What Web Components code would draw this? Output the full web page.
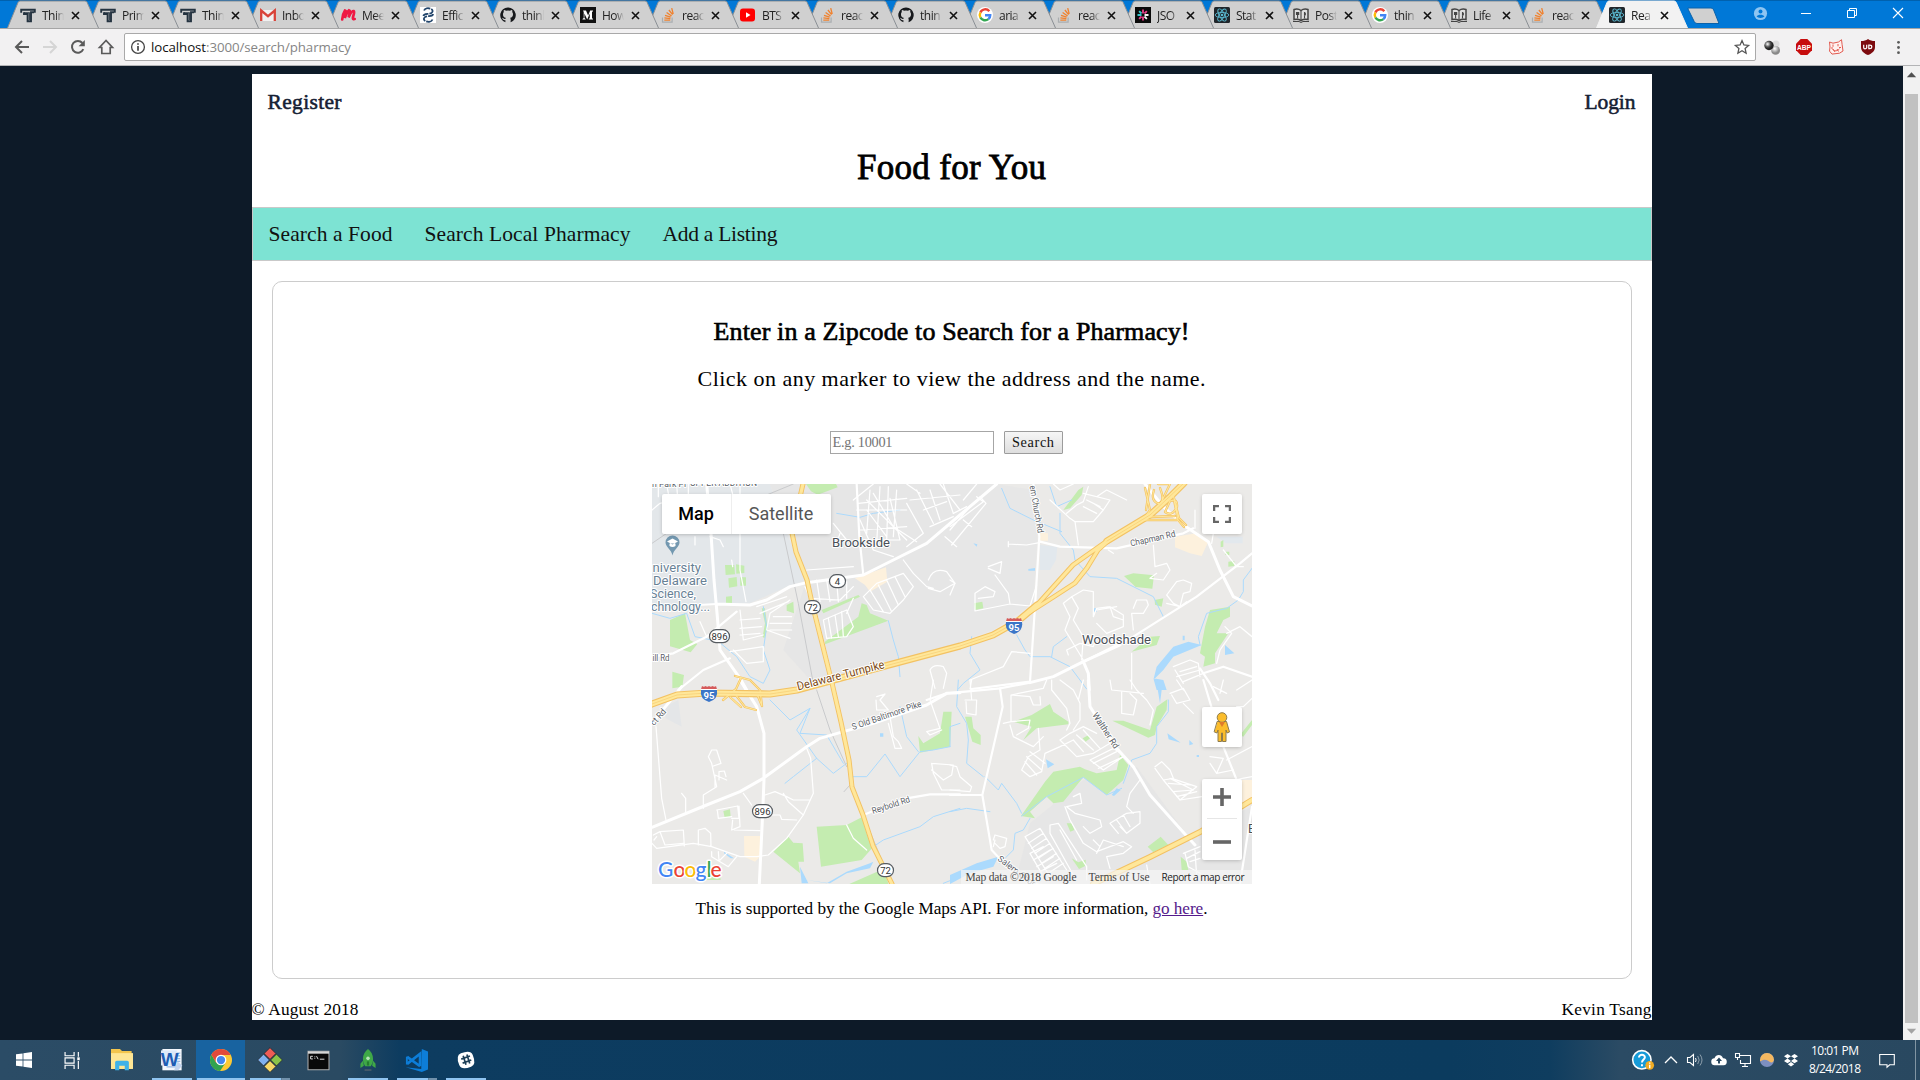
<!DOCTYPE html>
<html lang="en">
<head>
<meta charset="utf-8">
<title>Food for You</title>
<style>
html,body{margin:0;height:100%;overflow:hidden}
body{display:flex;flex-direction:column;height:1080px;font-family:"Liberation Serif",serif;color:#000}
</style>
</head>
<body>
<browser-tabs></browser-tabs>
<browser-toolbar></browser-toolbar>
<page-viewport>
  <food-app></food-app>
</page-viewport>
<task-bar></task-bar>
<script>
const define=(name,html,after)=>{
  const t=document.createElement('template');t.innerHTML=html;
  customElements.define(name,class extends HTMLElement{
    static get observedAttributes(){return ['name','size']}
    attributeChangedCallback(){if(this.shadowRoot&&after)after.call(this,this.shadowRoot)}
    connectedCallback(){
      if(this.shadowRoot)return;
      this.attachShadow({mode:'open'}).appendChild(t.content.cloneNode(true));
      if(after)after.call(this,this.shadowRoot);
    }
  });
};

/* Text run whose letter spacing is tuned to fill the width in its "w" attribute. */
define('fit-text','<style>:host{display:inline-block;white-space:pre}</style><span><slot></slot></span>',function(r){
  const w=+this.getAttribute('w'),s=r.querySelector('span'),n=this.textContent.length;
  s.style.letterSpacing='0px';
  const nat=s.getBoundingClientRect().width;
  const ls=(w-nat)/Math.max(1,n-1);
  s.style.letterSpacing=ls+'px';
  this.style.width=w+'px';
});

const stack='<path d="M2.5 10.5v4.7h9.6v-4.7" fill="none" stroke="#a9adb0" stroke-width="1.2"/><path d="M4.3 13.2h6M4.4 10.9l6 .7M5 8.3l5.7 1.9M6.6 5.5l5 3.5M8.9 3l3.7 4.7M11.7 1.2l1.5 5.8" stroke="#f0812d" stroke-width="1.3" fill="none"/>';
const tlogo='<path d="M1.200 5.700V2.800H14.800V5.700M4 5.200V7H7.600V14.200H11V5.300H14" fill="none" stroke="#243340" stroke-width="1.900"/><path d="M4 5.800H9.300V13" fill="none" stroke="#243340" stroke-width="1.100"/>';
const git='<path d="M8 .5a7.6 7.6 0 0 0-2.6 14.8v-2.2c-2.2.4-2.6-1-2.9-1.6l-.7-.7c1.4-.2 1.7 1.5 3.6 1.1.1-.5.3-.8.6-1.1C3.7 10.5 3 9.200 3 7.200c0-.9.3-1.600.8-2.100-.2-.6-.1-1.500.1-2.100.9 0 1.600.5 2.100.8a8 8 0 0 1 4 0c.7-.5 1.400-.8 2.100-.8.3.7.3 1.500.1 2.100.5.600.8 1.300.8 2.100 0 2-1 3.300-3 3.600.4.400.6.9.6 1.700v2.800A7.600 7.600 0 0 0 8 .5z" fill="#17191c"/><path d="M6 10.500C4 10 3.600 9 3.600 7.300c0-1 .3-1.500.9-2.100V3.500L6.200 4.400h3.600l1.700-.9v1.700c.6.600.9 1.100.9 2.100 0 1.700-.4 2.700-2.400 3.200l.3 3.500H5.800z" fill="#d0d0d0"/>';
const gg='<circle cx="8" cy="8" r="8" fill="#fff"/><g fill="none" stroke-width="2.5"><path d="M12.300 4.200A5.300 5.300 0 0 0 3.400 5.500" stroke="#ea4335"/><path d="M3.400 5.500a5.300 5.300 0 0 0 0 5" stroke="#fbbc05"/><path d="M3.400 10.500a5.300 5.300 0 0 0 8 1.600" stroke="#34a853"/><path d="M11.400 12.100A5 5 0 0 0 13.200 8.200H8" stroke="#4285f4"/></g>';
const react='<rect width="16" height="16" rx="1.500" fill="#20262b"/><g fill="none" stroke="#5ab9d0" stroke-width=".9"><ellipse cx="8" cy="8" rx="6.800" ry="2.600"/><ellipse cx="8" cy="8" rx="6.800" ry="2.600" transform="rotate(60 8 8)"/><ellipse cx="8" cy="8" rx="6.800" ry="2.600" transform="rotate(120 8 8)"/></g><circle cx="8" cy="8" r="1.300" fill="#5ab9d0"/>';
const book='<path d="M1 2.500c3-.8 5-.5 7 1 2-1.500 4-1.800 7-1v10c-3-.6-5-.3-7 1-2-1.300-4-1.600-7-1z" fill="#dedede" stroke="#444" stroke-width="1.500"/><path d="M8 3.500v10M4.600 5v6.500M3.500 5v2.500h2.200V5M11.500 5v6.500M11 5.500c2 0 2 3 0 3" stroke="#444" fill="none" stroke-width="1.100"/><path d="M0 14.500h6l2 1 2-1h6" stroke="#444" fill="none"/>';
const I={
 t:tlogo,so:stack,gh:git,g:gg,react,book,
 gmail:'<path d="M1 3h14v11H1z" fill="#f1f1f1"/><path d="M1.200 14V3.500L8 9.200l6.800-5.700V14" fill="none" stroke="#d9443a" stroke-width="2.300"/>',
 meet:'<path d="M2.200 12.500C2.500 8 4 5 5 3.500c1.600.4 1 3-.2 7.500C6 8 7 4.700 9 3.300c1.900.4.500 3.700-.4 7C10 7.500 11.300 3.800 13.600 4c1.700.9-.7 4.500-.7 7.200 0 1.200 1.200.9 1.800.8" fill="none" stroke="#ef1843" stroke-width="2.700" stroke-linecap="round"/>',
 eff:'<path d="M0 0h16v16H0z" fill="#fff"/><path d="M4 3.500C6-1 15 2 12 5.500 10 8 3.500 5.500 3.500 9M12.500 12.500c-2 4.500-11 1.500-8-2C6.500 8 13 10.500 13 7" stroke="#22456b" stroke-width="1.800" fill="none" stroke-dasharray="7 1"/>',
 med:'<path d="M0 0h16v16H0z" fill="#111"/><path d="M3 3.500h3l2.100 5 2.100-5H13v.8l-1 .8v6l1 .8v.6H8.800v-.6l1-.8V6.600l-2.600 6-2.800-6v4.300L5.600 12v.5H2.500V12L3.700 11V5z" fill="#fff"/>',
 yt:'<rect y="1.500" width="15" height="13" rx="3" fill="#f00"/><path d="M6 5.300v5.400L10.500 8z" fill="#fff"/>',
 json:'<path d="M0 0h16v16H0z" fill="#0a0a0a"/><g stroke-width="1.800"><path d="M8 2.500v4M11.900 4.100 9.500 6.500" stroke="#e8408a"/><path d="M13.500 8h-4M11.900 11.900 9.500 9.500" stroke="#f5f5f5"/><path d="M8 13.500v-4M4.100 11.900l2.400-2.400" stroke="#e8408a"/><path d="M2.500 8h4M4.100 4.100l2.400 2.400" stroke="#38c5c9"/></g>',
 back:'<path d="M15 8H2.500M8 2 2 8l6 6" fill="none" stroke="#5a5a5a" stroke-width="2"/>',
 fwd:'<path d="M1 8h12.500M8 2l6 6-6 6" fill="none" stroke="#d5d5d5" stroke-width="2"/>',
 reload:'<path d="M13.300 10.200A5.900 5.900 0 1 1 12.400 4" fill="none" stroke="#5a5a5a" stroke-width="2"/><path d="M14.800 1v6.200H8.600z" fill="#5a5a5a"/>',
 home:'<path d="M8 1.500 1.500 8.500h2.300v6h8.400v-6h2.300z" fill="none" stroke="#5a5a5a" stroke-width="1.700"/>',
 info:'<circle cx="8" cy="8" r="6.400" fill="none" stroke="#444" stroke-width="1.300"/><path d="M8 7v4.800M8 4.200v1.600" stroke="#444" stroke-width="1.700"/>',
 star:'<path d="m8 1.600 1.900 4.300 4.700.5-3.500 3.100 1 4.700L8 11.800l-4.100 2.400 1-4.700L1.400 6.400l4.700-.5z" fill="none" stroke="#555" stroke-width="1.300"/>',
 orbs:'<defs><radialGradient id="a" cx=".35" cy=".35"><stop offset="0" stop-color="#fff"/><stop offset=".6" stop-color="#555"/><stop offset="1" stop-color="#222"/></radialGradient><radialGradient id="b" cx=".4" cy=".3"><stop offset="0" stop-color="#fff"/><stop offset="1" stop-color="#888"/></radialGradient></defs><circle cx="12" cy="5" r="3.500" fill="#ddd"/><circle cx="11.600" cy="11.400" r="4.400" fill="url(#b)"/><circle cx="5" cy="6.500" r="4.700" fill="url(#a)"/>',
 abp:'<path d="M4.700 0h6.600L16 4.700v6.600L11.300 16H4.700L0 11.300V4.700z" fill="#c70d0d"/><text x="8" y="10.700" font-size="7.500" font-weight="bold" fill="#fff" text-anchor="middle" font-family="Liberation Sans" textLength="14" lengthAdjust="spacingAndGlyphs">ABP</text>',
 cat:'<path d="m1.500 3 3.500 1.200L10.500 3l3-2.300.6 4.800.9 6.500-3.500 2.200-7.500.9-2.500-3L2 8z" fill="#fff0ee" stroke="#e25a50"/><path d="M5 5.500v2.300M10 5v2.300M4.500 10.500c2.500 2 5 1.500 7-.7M5 10l2 3M9 10l1.500 2.500M3 9h2M11 8.500h2" fill="none" stroke="#e25a50"/>',
 shield:'<path d="M8 0c2 1.500 4 2 7 2v6c0 4-3 6.500-7 8-4-1.500-7-4-7-8V2c3 0 5-.5 7-2z" fill="#7d0b0f"/><path d="M3.700 5.800v3q0 1 1.300 1t1.700-1v-3M8.800 6.200v3.400h1q2 0 2-1.700t-2-1.700z" fill="none" stroke="#fff" stroke-width="1.200"/>',
 dots:'<g fill="#5a5a5a"><circle cx="8" cy="2.500" r="1.500"/><circle cx="8" cy="8" r="1.500"/><circle cx="8" cy="13.500" r="1.500"/></g>',
 user:'<circle cx="8" cy="8" r="7" fill="#8ec5f2"/><circle cx="8" cy="5.800" r="2.100" fill="#0078d7"/><path d="M3.800 11c1.500-2.300 6.900-2.300 8.400 0-1.600 2.300-6.800 2.300-8.400 0z" fill="#0078d7"/>',
 min:'<path d="M3 8.500h10" stroke="#fff"/>',
 max:'<path d="M3.500 5.500h7v7h-7zM5.500 5V3.500h7v7H11" fill="none" stroke="#fff"/>',
 close:'<path d="m3 3 10 10M13 3 3 13" stroke="#fff" stroke-width="1.100"/>',
 win:'<path d="M0 2.300 6.600 1.400v6.200H0zM7.400 1.300 16 0v7.600H7.400zM0 8.400h6.600v6.200L0 13.700zM7.400 8.400H16V16l-8.600-1.200z" fill="#fff"/>',
 task:'<path d="M1 0v3.500h8.500V0M1 16v-3.500h8.500V16M1 5.500h8.500v5H1zM13.500 0v4.500M13.500 8.500V16" fill="none" stroke="#fff" stroke-width="1.100"/><path d="M12.500 5h2.300v2.700h-2.300z" fill="#fff"/>',
 folder:'<path d="M0 0h6.500L8 1.500h7V14.500H0z" fill="#f3c54d"/><path d="M0 3h16v11.500H0z" fill="#fee695"/><path d="M3 15.500V9.700Q3 8.500 4.200 8.500h7.600q1.200 0 1.200 1.200v5.800h-3v-3.300H6v3.300z" fill="#3fb2e8"/>',
 word:'<path d="M1 0h14v15.500H1z" fill="#f4f7fc"/><path d="M9 3h5M9 5h5M9 7h5M9 9h5M4 13h8" stroke="#9ab7df"/><path d="M0 1h11.500v11H0z" fill="#dce8f8"/><text x="6.300" y="12" font-size="14" font-weight="bold" fill="#1d5cb3" text-anchor="middle" font-family="Liberation Sans" textLength="13" lengthAdjust="spacingAndGlyphs">W</text><path d="m12 9 3.500 3-3 3.500h-3z" fill="#c3d4ee"/>',
 chrome:'<circle cx="8" cy="8" r="8" fill="#fcc934"/><path d="M1 4.100A8 8 0 0 0 7.300 16L11.300 10 8 8 4.500 10z" fill="#31a350"/><path d="M1 4.100A8 8 0 0 1 15 4.300H8L8 8 4.700 10.200z" fill="#e24a3b"/><circle cx="8" cy="8" r="3.900" fill="#fff"/><circle cx="8" cy="8" r="3" fill="#4587ee"/>',
 gitw:'<g transform="rotate(45 8 8)" stroke="#222" stroke-width=".4"><path d="M2.200 2.200h5.500v5.500H2.200z" fill="#ee5b55"/><path d="M8.300 2.200h5.500v5.500H8.300z" fill="#8bc34a"/><path d="M2.200 8.300h5.500v5.500H2.200z" fill="#7fb0ef"/><path d="M8.300 8.300h5.500v5.500H8.300z" fill="#f7d768"/></g>',
 cmd:'<path d="M0 1h16v14H0z" fill="#090909" stroke="#aaa" stroke-width=".8"/><path d="M0 1h16v1.800H0z" fill="#d6d6d6"/><path d="M3.700 4.800H2v2h1.700M5.200 4.900v.7M5.200 6.300v.6M6.500 4.700l1.200 2.300M9 7h3.500" stroke="#eee" stroke-width=".7" fill="none"/>',
 mongo:'<path d="M8 0c2.200 1.800 3.700 4 3.700 7.300 0 2.200-.6 3.700-1.700 5.200H6c-1.100-1.500-1.700-3-1.700-5.200C4.300 4 5.800 1.800 8 0z" fill="#3fa847"/><path d="M4.300 8.500 2.500 10.800v3l2.500-1.600M11.700 8.500l1.800 2.300v3L11 12.200" fill="#3fa847"/><circle cx="8" cy="6.800" r="1.300" fill="#b8e4b8"/><path d="M7.200 9h1.600v3H7.200z" fill="#257d30"/><path d="M5.500 15.300h5" stroke="#54626c"/>',
 vs:'<path d="m11.700 0 4.300 1.800v12.400L11.700 16 .5 12.700l10.800 1.200z" fill="#0d7dd8"/><path d="m1.500 5.500 9 6.500M1.500 10.300 10.500 3.300V12" stroke="#0d7dd8" stroke-width="1.900" fill="none"/><path d="M1.300 5.300v5.500" stroke="#0d7dd8" stroke-width="1.300"/>',
 slack:'<path d="M3.500 2Q12-1.500 14 3.500 17.500 12 12.500 14 4 17.500 2 12.500-1.500 4 3.500 2z" fill="#fff"/><g stroke="#1e4058" stroke-width="1.500"><path d="m5.500 4.200 2.500 8M8.800 3.200l2.500 8M3.800 7.200l7.700-2.700M5 10.800 12.700 8"/></g>',
 help:'<circle cx="7.500" cy="7.500" r="7" fill="#179bd8" stroke="#fff" stroke-width="1.200"/><path d="M5.300 5.800C5.300 2.800 10 3 9.800 5.700 9.700 7.200 7.600 7.500 7.600 9.500M7.600 10.900v1.400" fill="none" stroke="#fff" stroke-width="1.500"/><circle cx="13.500" cy="11.700" r="3.300" fill="#f0ab23"/><path d="M13.500 11.300v2.600M13.500 9.500v1" stroke="#fff" stroke-width="1.100"/>',
 up:'<path d="m2 11 6-6 6 6" fill="none" stroke="#fff" stroke-width="1.300"/>',
 snd:'<path d="M.5 5.500H3l3.500-3v11L3 10.500H.5z" fill="none" stroke="#fff" stroke-width="1.100"/><path d="M8.500 6q1.300 2 0 4" stroke="#fff" fill="none"/><path d="M10.700 4q3 4 0 8M13 2.500q4 5.500 0 11" stroke="#8ea0ad" fill="none"/>',
 cloud:'<path d="M4 13.200a3.500 3.500 0 0 1-.5-7C5 2 10.500 1.800 12 6.200a3.500 3.500 0 0 1 .5 7z" fill="#fff"/><path d="m8 5.500 3 3.500H9v2.500H7V9H5z" fill="#294860"/>',
 mon:'<path d="M4.500 3.500h11v8h-10V8M10 11.500v3M7 14.500h6M.5 1.500h4v4h-4zM2.500 5.500V8" fill="none" stroke="#fff" stroke-width="1.100"/>',
 orb:'<circle cx="8" cy="8" r="7" fill="#7d8fc0"/><path d="M1 8a7 7 0 0 1 14 0q-1 3-3 2.500C9 9.500 7 5.500 1 9.500z" fill="#f4b860"/>',
 drop:'<g fill="#fff"><path d="m4.500 2 3.500 2.300-3.500 2.300L1 4.300zM11.500 2 15 4.300l-3.500 2.300L8 4.300zM4.500 6.600 8 8.900l-3.500 2.300L1 8.900zM11.500 6.600 15 8.900l-3.500 2.300L8 8.900zM8 10l3.200 2.200L8 14.500l-3.200-2.300z"/></g>',
 note:'<path d="M.7 2.500h14.600v10.300h-4.600L8 15.200V12.800H.7z" fill="none" stroke="#fff" stroke-width="1.100"/>',
 full:'<path d="M1 5.300V1h4.300M10.700 1H15v4.300M15 10.700V15h-4.300M5.300 15H1v-4.300" fill="none" stroke="#666" stroke-width="2"/>',
 plus:'<path d="M8 0v16M0 8h16" stroke="#666" stroke-width="3.200"/>',
 minus:'<path d="M0 8h16" stroke="#666" stroke-width="3.200"/>',
 tri:'<path d="M3 11h10L8 5.500z" fill="#505050"/>',
 trid:'<path d="M3 5h10l-5 5.500z" fill="#a3a3a3"/>'
};
define('ui-icon','<style>:host{display:block;flex:none}svg{display:block;overflow:visible}</style><svg viewBox="0 0 16 16"></svg>',function(r){
  const s=r.querySelector('svg'),z=this.getAttribute('size')||16;
  s.setAttribute('width',z);s.setAttribute('height',z);s.innerHTML=I[this.getAttribute('name')]||'';
});

/* One browser tab: slanted shape, favicon, faded title and close mark. */
define('browser-tab',`<style>
:host{display:block;flex:none;width:80px;height:28px;font:12px "Open Sans",sans-serif;color:#222}
:host([narrow]){width:79px}
.b{display:grid;width:93px}
.b>*{grid-area:1/1}
svg{display:block;overflow:visible}
.r{display:flex;align-items:center;padding:2px 0 0 13.500px;height:26px;box-sizing:border-box;margin-top:1px}
.l{width:22px;margin-left:6px;overflow:hidden;white-space:nowrap;letter-spacing:-.5px;-webkit-mask:linear-gradient(90deg,#000 60%,transparent);mask:linear-gradient(90deg,#000 60%,transparent)}
.x{width:9px;height:9px;margin-left:7px}
</style><div class="b"><svg width="93" height="28"><path class="s" d="M.5 28 11 2.500Q11.700 1 13 1H78Q79.600 1 80.200 2.500L91.500 28" fill="#d0d0d0" stroke="#8a8f94" stroke-width="1"/></svg>
<div class="r"><ui-icon></ui-icon><span class="l"><slot></slot></span><svg class="x" viewBox="0 0 9 9"><path d="m1 1 7 7M8 1 1 8" stroke="#111" stroke-width="1.600"/></svg></div></div>`,function(r){
  r.querySelector('ui-icon').setAttribute('name',this.getAttribute('icon'));
  if(this.hasAttribute('active')){const p=r.querySelector('.s');p.setAttribute('fill','#f2f2f2');p.setAttribute('stroke','#f2f2f2')}
});
define('browser-tabs',`<style>
:host{display:flex;height:28px;background:#0078d7;flex:none;justify-content:space-between;overflow:hidden;box-shadow:inset 0 1px #0061ae}
.t{display:flex;padding-left:6.500px}
.n{margin-left:11px}
.w{display:flex;align-items:center;padding:0 14.500px 2px 0;gap:30px}
</style><div class="t"></div><div class="w"><ui-icon name="user" size="15"></ui-icon><ui-icon name="min"></ui-icon><ui-icon name="max"></ui-icon><ui-icon name="close"></ui-icon></div>`,function(r){
  const L=[['t','Thin'],['t','Prim'],['t','Thin'],['gmail','Inbo'],['meet','Mee'],['eff','Effic'],['gh','think'],['med','How'],['so','reac'],['yt','BTS'],['so','reac'],['gh','thin'],['g','aria'],['so','reac'],['json','JSO'],['react','Stat'],['book','Post'],['g','thin'],['book','Life'],['so','reac'],['react','Rea']];
  r.querySelector('.t').innerHTML=L.map(([i,t],k)=>`<browser-tab icon="${i}" ${k>8?'narrow':''} ${k==20?'active':''} style="z-index:${k==20?50:30-k}">${t}</browser-tab>`).join('')+'<svg class="n" width="33" height="28"><path d="M2 8h23q2 0 2.700 2L33 23.500H11q-2 0-2.800-2L2 9z" fill="#d0d0d0" stroke="#0a62aa"/></svg>';
});
define('browser-toolbar',`<style>
:host{display:flex;align-items:center;box-sizing:border-box;height:38px;flex:none;background:#f2f1f2;border-top:1px solid #a5a5a5;border-bottom:1px solid #b3b4b6;padding:0 14px 0 14px;font:13.300px "Open Sans",sans-serif}
.n{display:flex;gap:12px;width:110px;flex:none}
.o{display:flex;align-items:center;flex:1;height:26px;border:1px solid #a9a9a9;border-radius:2px;background:#fff;padding:0 5px;margin-top:0}
.u{flex:1;margin-left:5px;color:#858585}
b{font-weight:400;color:#111}
.e{display:flex;gap:16px;margin-left:8px;align-items:center}
.e :last-child{margin:0 0 0 -1px}
</style><div class="n"><ui-icon name="back"></ui-icon><ui-icon name="fwd"></ui-icon><ui-icon name="reload"></ui-icon><ui-icon name="home"></ui-icon></div>
<div class="o"><ui-icon name="info"></ui-icon><span class="u"><fit-text w="200"><b>localhost</b>:3000/search/pharmacy</fit-text></span><ui-icon name="star"></ui-icon></div>
<div class="e"><ui-icon name="orbs"></ui-icon><ui-icon name="abp"></ui-icon><ui-icon name="cat"></ui-icon><ui-icon name="shield"></ui-icon><ui-icon name="dots" size="15"></ui-icon></div>`);

define('page-viewport',`<style>
:host{display:flex;height:974px;flex:none;background:#0d1a28}
.c{flex:1;display:flex;justify-content:center;align-items:flex-start;padding-top:8px}
.s{width:17px;flex:none;background:#f1f1f1;display:flex;flex-direction:column;align-items:center}
.s ui-icon{height:17px;padding-top:1px;box-sizing:border-box}
.t{width:13px;height:929px;margin-top:11px;background:#c1c1c1}
</style><div class="c"><slot></slot></div><div class="s"><ui-icon name="tri" size="15"></ui-icon><div class="t"></div><ui-icon name="trid" size="15"></ui-icon></div>`);

define('food-app',`<style>
:host{display:flex;flex-direction:column;width:1400px;height:946px;background:#fff}
header{display:flex;justify-content:space-between;padding:15px 16px 0;font-size:21.500px;line-height:26px;height:42px;box-sizing:border-box;color:#152033;-webkit-text-stroke:.55px #152033}
h1{margin:0;text-align:center;font-size:35px;line-height:44px;font-weight:400;-webkit-text-stroke:.8px #000;padding:30px 0 17px}
nav{display:flex;gap:32px;box-sizing:border-box;height:54px;border:1px solid #c9c9c9;background:#7de3d3;padding:2px 16px 0;align-items:center;font-size:21.500px;color:#111}
footer{display:flex;justify-content:space-between;font-size:17.300px;line-height:20px;margin-top:21px}
</style>
<header><fit-text w="74">Register</fit-text><fit-text w="51">Login</fit-text></header>
<h1><fit-text w="189">Food for You</fit-text></h1>
<nav><fit-text w="124">Search a Food</fit-text><fit-text w="206">Search Local Pharmacy</fit-text><fit-text w="115">Add a Listing</fit-text></nav>
<pharmacy-search></pharmacy-search>
<footer><fit-text w="107">© August 2018</fit-text><fit-text w="90">Kevin Tsang</fit-text></footer>`);

define('pharmacy-search',`<style>
:host{display:flex;flex-direction:column;align-items:center;box-sizing:border-box;height:700px;margin:20px 20px 0;border:1px solid #ccc;border-radius:10px}
h2{margin:34px 0 0;font-size:26px;line-height:32px;font-weight:400;-webkit-text-stroke:.65px #000}
p{margin:0}
.a{font-size:22px;line-height:26px;margin-top:18px}
form{display:flex;gap:10px;margin:39px 11px 0 0;height:23px}
.i{box-sizing:border-box;width:164px;border:1px solid #a6a6a6;padding:0 2px;font-size:14.300px;line-height:21px;color:#757575}
button{box-sizing:border-box;width:59px;border:1px solid #9c9c9c;border-radius:1px;background:linear-gradient(#f6f6f6,#dedede);padding:0;font:14.300px/20px "Liberation Serif",serif;color:#111}
map-view{margin-top:30px}
.m{font-size:17.200px;line-height:20px;margin-top:15px}
a{color:#551a8b;text-decoration:underline}
</style>
<h2><fit-text w="476">Enter in a Zipcode to Search for a Pharmacy!</fit-text></h2>
<p class="a"><fit-text w="508">Click on any marker to view the address and the name.</fit-text></p>
<form><div class="i"><fit-text w="60">E.g. 10001</fit-text></div><button type="button"><fit-text w="42">Search</fit-text></button></form>
<map-view></map-view>
<p class="m"><fit-text w="512">This is supported by the Google Maps API. For more information, <a>go here</a>.</fit-text></p>`);

/* Map artwork. Each entry: style class, tile key, path data in tile units (3 per pixel). */
const T={A:[640,470],B:[950,470],C:[640,680],D:[950,680],E:[800,600]};
const art=[
 ['z','A','M36 42H390L440 190 500 330 440 350 330 400 36 405z','#e3e7ea'],
 ['z','A','M390 42H960V525L735 590 520 640 430 540 500 330z','#e6e6e6'],
 ['z','B','M0 42H140L250 60 262 210 250 400 130 480 0 525z','#e7e7e7'],
 ['z','D','M560 260 710 465 906 380V612H300L200 590 240 430 400 300z','#e6e6e6'],
 ['z','B','M270 225 322 230 318 270 300 300H270z','#e2e8ed'],
 ['z','B','M800 200h78v20h-50z','#e2e8ed'],
 ['z','A','M645 325 738 292 742 335 690 365 675 345z','#fdf1dd'],
 ['z','B','M675 200 740 190 775 215 755 258 720 250 675 232zM268 188l26 2v22h-24z','#fdf1dd'],
 ['z','C','M312 468h48v62l-15 15-32-15z','#fdf1dd'],
 ['z','D','M876 300h30v55l-30 15z','#fdf1dd'],
 ['z','C','M75 80l40-20 10 80-48-25z','#e4e6e8'],
 ['g','A','M255 285l28 0 2 28-28 2zM288 283l25 4 0 22-24 2zM265 325l25-4 2 28-25 4zM300 322l18 0 0 25-17 0zM258 380l18-2 0 22-18 5zM90 450l45-20 15 80 22 12-20 25-62-18zM97 605l35 10-5 35-30 5zM440 405l20-10 2 35-22-8zM365 415l10 0 8 60-10 30-5-5 7-40zM498 42h90l5 10-60 22-20-10zM545 420 655 375 660 380 550 430zM555 515 655 440 665 400 680 405 690 430 745 452 555 523z'],
 ['g','B','M385 60l15-10-5 25-35 40-20 5zM522 318l28-8 62 6-5 40-50-5zM72 400l25-5 3 20-25 5zM614 390l26-5-5 25-20-6zM545 545 600 500 630 498 620 525zM812 215l8-5 0 20-8 2zM826 245l12 0 0 10-12 0zM835 275l18-2 0 15-18 2zM765 470l15-50 60-10 0 30-20 10-20 40 35 0-40 60 0 30-35 10 5-30-15-10z'],
 ['g','C','M530 440 620 435 665 412 690 490 700 500 665 540 543 560zM400 515 445 470 460 488 488 490 492 545 475 545 480 580zM250 393l20-5 2 22-18 3zM628 612 735 565 745 612zM835 168 850 190 900 160 910 95 935 95 930 200 880 210 840 218zM160 600l80-15 2 15z'],
 ['g','D','M45 110l20 0 5 35 22 20 0 30-25-10zM190 125 245 105 300 72 310 95 355 125 355 133 260 145 220 180 245 140zM487 122 520 122 600 150 620 80 652 58 650 90 620 140 615 165 595 173zM213 408 285 305 310 275 390 260 405 268 440 280 500 270 510 225 535 255 520 300 470 345 400 292 340 365 310 370 290 350 240 395 255 415zM398 175l18-10 6 8-15 12zM593 500 632 470 655 495 610 517zM350 430l15 0 8 20-12 5zM365 535l20 12 22-8 0 18-20 10zM692 530l18 15 5 25-20 0zM870 165 906 120V135L880 170z'],
 ['w','A','M590 130 660 142 700 130 780 120M230 510 290 560 330 620 370 640 390 600 370 540 380 470 370 410M745 452 760 510 775 560 780 620M36 430 90 445 140 430 165 500 240 515'],
 ['w','B','M155 55 180 115 250 150 335 185M330 130 330 190 370 240 375 270 420 320 500 325 570 360 610 380 640 440M300 50 320 110 365 90M200 495 225 540 240 560 300 560 360 590 410 657M65 500 60 550 90 600 40 640 25 657M350 500 310 530 305 560M906 295 880 330 880 365 865 390 830 415 770 430 745 500 750 525'],
 ['w','C','M390 60 450 120 510 85 470 150 530 235 580 280 620 250M510 85 480 160 560 165 610 250M435 310 460 290 530 235M640 290 680 290 735 222 780 290 840 215 880 210 930 200M780 80 800 170 835 215M700 500 730 480 840 440 880 410 960 385M930 200 930 140 960 130M960 590 910 610'],
 ['w','D','M0 395 50 385 120 395M105 290 145 330 155 310 200 370 215 400M240 415 220 450 195 460 190 510 150 550M25 0 20 80 50 130 55 180 50 250 100 290M655 60 655 95 620 140 620 190 600 220 545 240 520 310M215 408 290 350 400 292 470 345 515 325'],
 ['v','B','M610 630 620 590 670 530 715 515 755 525 670 560 640 600zM610 625l10 35 30 0-10-30zM825 525l28 25-28 5zM432 415l8 0 0 10-8 0zM235 297l20-3 0 8-20 0zM70 220l12 3-2 7zM698 497l6 0 0 14-6 0z'],
 ['v','C','M500 600 560 610 620 575 690 550 700 545 690 565 620 580 570 610zM480 560l25 50-20 0zM252 515l30 20-10 0-20-15zM720 160l10 0 0 10-10 0z'],
 ['v','D','M0 585 80 550 145 530 130 560 60 580 0 612zM288 238l25 15-20 12zM652 160l40 28-36-10zM718 180l12 12-12 4zM485 345l15-20 12 5-20 18zM740 225h7v6h-7zM630 70 620 10 625 0 635 30z'],
 ['n','A','M36 120 60 100 170 75 200 80M55 42V80M80 42 85 70M110 42 112 72M145 42V72M270 42 280 80M300 42 300 300 318 395M210 200 240 210 250 230M165 200 165 225M275 270 278 290M500 300 640 290M530 330 540 395M560 330 570 395M590 335 595 395M620 335 620 385M495 350 510 385 600 390 640 350M580 160 620 210M600 190 590 220M640 90 700 42M655 100 800 85M700 70 760 170M680 120 740 200M660 150 700 240M690 60 680 190M720 50 710 220M745 50 740 215M770 60 760 200M660 180 800 170M670 210 780 210M650 120H800M840 70 800 42M810 90 960 75M830 60 880 160M870 60 900 150M910 42 940 130M800 100 850 190 800 230M750 85 780 210M900 42 960 120M850 120 920 95M870 170 940 140M700 240 760 260M680 90 800 210M760 170 830 215M915 200 950 230'],
 ['n','A','M670 380 710 340 790 310 820 350 790 390 750 430 700 420zM690 360 730 425M715 345 755 425M740 330 775 405M765 320 795 380M550 450 620 420 640 470 620 500 560 505zM565 445 575 505M585 435 595 500M605 425 610 500M640 385 620 430M790 270 820 310M820 310 860 350 880 355M865 330Q880 290 920 305L945 340 900 365 865 355M270 545 370 530 370 575 320 580 280 540M300 420 310 510 370 495M300 450 360 445M300 475 365 470M300 495 360 490M390 430 380 480 450 505M390 430 450 390M400 440 455 440M390 460 455 460M390 480 455 480M350 410 440 380M360 430 445 395M870 600Q880 580 910 590L920 610 910 655M870 600 885 655M180 455 200 500'],
 ['n','B','M40 90 80 42M0 170 100 95 80 80M60 110 0 180M90 80 108 100 5 225M40 150 65 170M10 130 50 110M0 330 15 340 0 375M115 290 155 275 150 310 115 295M135 315 175 370 180 402M75 423 180 402 240 408 260 345M75 423 75 370 105 350 135 365 130 380 85 385M175 215 175 230M175 222 230 225 268 218M310 42 330 60 370 42M300 90 360 145 375 155 385 225M350 130 380 105 400 95 415 50M375 155 430 155 460 120 430 100M400 110 440 130M410 90 450 110M400 70 480 90 460 120M440 80 470 60 530 90M340 400 365 380 400 360 430 365 430 440M340 400 360 440 345 480 400 570M365 380 385 415 370 450 400 500 395 570M430 440 440 415 480 410 520 435 520 470 470 490 440 460M480 410 490 440 520 450M355 555 350 540 390 520 430 530 440 500M440 420 500 410M550 415 560 390 590 390 595 405 580 430 545 430 550 480M610 225 615 290 650 280 660 300 640 330 600 325 620 310M650 375 670 400 690 410 700 370 720 365 725 340 700 330 680 335 650 375M650 400 690 410 710 395M60 630 160 590 185 545 240 550M65 630 60 657M545 550 545 657M475 240 490 250M735 120 735 175M790 190 785 220M820 240 860 290 880 290M830 490 870 470 906 500M825 470 845 490 810 540 800 580M670 590 720 570 745 580 750 620M690 605 740 590M680 620 750 600M700 635 760 610M675 600 700 640'],
 ['n','C','M48 140 65 355 78 420M125 340 137 355 137 395M190 385 190 345 230 320 215 250 205 230 215 210 230 210 243 250 220 258M225 320 225 285 260 300M237 300V275L253 273 258 290M310 340 335 375M375 345 405 335 440 350 460 360 510 360M430 340 445 365 490 405M375 405 420 405 425 418 470 420M500 205 512 235 520 340 490 405 440 475 385 525 350 530M350 530 300 530 215 500 160 490 50 505 36 490M230 390 293 378 297 415 275 415M297 378 300 440 275 450 278 420M232 390 235 415 275 410M283 450 360 452M40 465 60 455 130 450 133 498M60 455 75 495 130 490M42 480 50 470M175 495 175 450 195 445 212 460 213 500M215 515 215 530 265 560 290 530M240 540 260 520M235 515 237 540M710 50 735 42 720 60 745 90 710 90 708 60M745 130 765 205 785 205 775 185 760 170 750 110 765 110M880 0 870 60 900 145 860 155 870 165 905 150M875 250 940 255 935 285 910 300 875 270M875 250 880 280 905 330 960 330M620 435 640 475 680 510'],
 ['n','D','M45 60 80 60 78 105 50 100 48 65M60 0 65 60M183 45 240 50 250 75 272 75 270 50M160 130 183 125 183 45M183 45 280 25 290 0M305 0 305 30 350 85 360 130 350 150M330 0 370 30 390 70 390 120 370 150M385 60 400 0M480 0 485 30 580 40M515 35 515 100 550 105 560 60 540 40M540 0 560 30 590 60 610 90 600 135M183 125 240 120 235 145 200 165M180 135 190 170 250 200 280 170M265 145 270 210 235 230 215 270 240 290 275 275 285 220 330 200 370 180M230 230 275 270M225 245 260 285M240 215 285 250M330 180 360 160 400 140 440 160M330 180 380 230 430 220 480 190M370 180 400 215M380 165 430 210M400 150 450 205M420 240 490 205 520 225M430 250 500 215M445 265 520 230M420 240 460 270 520 230M370 350 390 340 395 370 350 380 375 400 450 420 455 440 420 460 400 440M345 380 360 420 400 490 440 515 520 485 545 500 520 520 470 530M300 460 300 435 325 430 410 560 410 600M300 460 370 585M330 450 380 540M470 530 480 565M430 480 450 500M440 520 460 480 520 500M480 430 530 400 570 395 570 430 530 460 510 440M480 430 505 460M500 420 530 460M520 405 540 440M570 300 540 340 530 380 550 400M615 260 635 245 660 270 670 295 640 300 615 265M640 300 690 360 755 350M660 295 730 330M655 310 720 315M670 335 730 330M680 350 740 335M690 360 740 320 665 295'],
 ['n','D','M225 470 270 445M235 490 280 460M245 505 290 475M255 520 300 490M265 535 310 505M275 550 320 520M285 565 330 535M295 580 340 550M225 470 300 590M270 445 350 570M240 520 275 580M240 520 280 500M250 540 300 510M260 560 310 530M270 575 320 550M660 40 700 25 720 60 680 70 665 45M680 0 700 30M700 70 730 100M780 230 820 235 800 280 780 250M800 280 850 270M830 240 906 200M850 300 906 290M700 520 750 500M710 535 750 515M720 545 750 535M705 520 715 560 750 580M735 510 740 590M820 0 810 40M790 20 830 40M590 555 600 612M0 255 20 260 30 290 65 320 60 335 0 330M130 480 135 465 170 475 165 500 150 505 135 490M130 500 135 480M860 30 906 0M860 80 880 80 906 55'],
 ['r','A','M430 190 475 400 520 640M380 75 460 42M36 220 80 190'],
 ['r','C','M530 30 570 150 620 260M612 335 630 315M670 405 725 540'],
 ['M2','A','M175 405 230 402 M36 560 100 550 200 500 290 425M115 660 190 600 270 565M650 42 658 200 670 315'],
 ['M2','B','M240 635 255 410 268 200 250 42M270 215 330 230 500 235 700 190 730 175M65 657 240 635'],
 ['M3','A','M200 42 213 190 222 330 232 440 240 540 300 625 320 660M230 402 330 405 380 390 450 350 500 338 560 330 670 315 760 270 860 220 960 135 1070 42'],
 ['M3','C','M36 442 200 375 300 335 370 295 500 200 540 175 610 155 700 130 860 75 920 40 960 38M300 0 350 80 372 160 372 300 368 400 358 612M36 130 125 20'],
 ['M2','C','M670 405 700 393 800 355 870 343 960 343'],
 ['M2','E','M380 300 440 280 600 265 690 248'],
 ['M3','E','M690 248 760 230 850 185 960 135'],
 ['M2','B','M400 575 550 500 740 380 870 280 906 250'],
 ['M3','B','M400 575 415 610 418 660M585 42 640 110 700 165 775 215 810 300 850 380 906 408'],
 ['M2','B','M750 595 780 640 805 690M760 610 820 590 906 620'],
 ['M2','D','M150 25 158 80 97 345 0 345M97 345 125 510 200 590M760 0 820 200 860 300M906 380 870 612'],
 ['M3','D','M415 0 420 80 500 205 550 260 600 345 710 468 735 495']
];
const hw=[
 [.9,'M1145 488 1150 510 1143 520 1178 520 1184 527M1150 484 1146 510M1158 484 1170 484 1160 505M1173 494 1179 518 1186 525M1150 517 1175 516M1178 520 1174 500M1160 488q5 12 0 16q-10-2-6-14M1170 501q8-3 7 6q-5 10-12 5z'],
 [.9,'M723 700 736 689 741 678M762 706 760 690 750 680 735 676M735 694 745 707 756 710M741 707 730 697M757 694 762 706'],
 [2.800,'M803 484 797 510 792 533 796 552 807 580 812 603 832 683 841 722 849 760 852 787 863 815 873 846 892 884'],
 [4.200,'M652 704 677 695 707 693 770 694 797 690 885 666 960 646 993 635 1018 621 1037 605'],
 [2.700,'M1030 612 1037 605 1073 565 1107 541M1030 612 1055 596 1075 583 1087 568 1098 550 1108 541'],
 [4.200,'M1107 541 1150 515 1170 497 1184 483'],
 [3.400,'M1093 884 1150 857 1200 832 1252 800']
];
const mapSvg=()=>{
 let s='';
 for(const [c,t,d,f] of art)s+=`<path class="${c}" transform="translate(${T[t]}) scale(.33333)" d="${d}"${f?` style="fill:${f}"`:''}/>`;
 for(const [w,d] of hw)s+=`<path class="h" d="${d}" stroke="#f3c263" stroke-width="${w*1.450+1}"/>`;
 for(const [w,d] of hw)s+=`<path class="h" d="${d}" stroke="#ffe79a" stroke-width="${w*1.150}"/>`;
 s+='<path class="h" d="M652 704 677 695 707 693 770 694 797 690 885 666 960 646 993 635 1018 621M1107 541 1150 515 1184 483" stroke="#f7d078" stroke-width=".8"/>';
 const tx=(x,y,z,t,o={})=>`<text x="${x}" y="${y}" font-size="${z}" ${o.w?`textLength="${o.w}" lengthAdjust="spacingAndGlyphs"`:''} fill="${o.f||'#5a6066'}" ${o.r?`transform="rotate(${o.r} ${x} ${y})"`:''}>${t}</text>`;
 s+=tx(832,546.500,13,'Brookside',{w:58,f:'#4a5058'})+tx(1082,643.500,13,'Woodshade',{w:69,f:'#4a5058'});
 s+=tx(652.500,571.500,12.500,'niversity',{w:48.500,f:'#688195'})+tx(653,584.500,12.500,'Delaware',{w:54,f:'#688195'})+tx(650,597.500,12.500,'Science,',{w:46,f:'#688195'})+tx(651,610.500,12.500,'chnology...',{w:59,f:'#688195'});
 s+=tx(798,690.500,12,'Delaware Turnpike',{w:90,r:-14.500,f:'#7c4a14'});
 s+=tx(853,730,9,'S Old Baltimore Pike',{w:73,r:-19})+tx(873,814,9,'Reybold Rd',{w:39.500,r:-18})+tx(1131,546.500,9,'Chapman Rd',{w:46,r:-12.500})+tx(1029.500,486,9,'em Church Rd',{w:48,r:80})+tx(1092,715,9,'Walther Rd',{w:41,r:57})+tx(997,860,9,'Salem Church',{w:54,r:37})+tx(652.500,661,9,'ill Rd',{w:17})+tx(654,726,9,'ct Rd',{w:19,r:-48})+tx(652,487,9,'n Park Pl',{w:34})+tx(690,486,9,'UPPER ADDITION',{w:67})+tx(1248,832.500,12.500,'E',{f:'#4a5058'});
 for(const [x,y,n] of [[837.500,581,'4'],[812.500,607,'72'],[719.500,636,'896'],[762.500,811,'896'],[885.500,870,'72']]){
  const w=n.length>2?20:16;
  s+=`<rect x="${x-w/2}" y="${y-6.300}" width="${w}" height="13" rx="6.500" fill="#fff" stroke="#565b60" stroke-width="1.200"/><text class="k" x="${x}" y="${y+3.600}" font-size="9.500" text-anchor="middle" fill="#333">${n}</text>`;
 }
 for(const [x,y] of [[709,694],[1014,626]])
  s+=`<path d="M${x-7} ${y-8}q2 1.500 3.500 0q1.800 1.500 3.500 0q1.800 1.500 3.500 0q2 1.500 3.500 0l1.200 4h-16.400z" fill="#d65b5b"/><path d="M${x-8} ${y-4}h16q1.500 9-8 12q-9.500-3-8-12z" fill="#3b76c8"/><path d="M${x-8} ${y-4.500}h16" stroke="#fff"/><text class="k" x="${x}" y="${y+4.500}" font-size="9.500" font-weight="bold" text-anchor="middle" fill="#fff">95</text>`;
 s+='<path d="M672.500 535.500a7 7 0 0 1 7 7c0 4.500-6 7-7 13-1-6-7-8.500-7-13a7 7 0 0 1 7-7z" fill="#7398b0"/><path d="m667 541.500 5.500-3 5.500 3-5.500 3zM669.500 543.500v2.500q3 2 6 0v-2.500" fill="#fff"/>';
 const G=[['G',659,'#4285f4'],['o',674.500,'#ea4335'],['o',685.500,'#fbbc05'],['g',696.500,'#4285f4'],['l',707.500,'#34a853'],['e',711.500,'#ea4335']];
 s+='<g font-size="21">'+G.map(([c,x,f])=>`<text x="${x-1}" y="877" fill="${f}" style="font-family:Lato;font-weight:500;stroke-width:3px">${c}</text>`).join('')+'</g>';
 return s;
};
define('map-view',`<style>
:host{display:grid;width:600px;height:400px;flex:none;overflow:hidden;background:#ebeae8;font-family:Roboto,sans-serif}
:host>*{grid-area:1/1}
svg.m{display:block}
path{stroke-linejoin:round;stroke-linecap:round}
.w,.n,.M2,.M3,.r,.h{fill:none}
.z{stroke:none}.g{fill:#c4ecb0}.v{fill:#abdafd}
.w{stroke:#abdafd;stroke-width:3}
.n{stroke:#fff;stroke-width:3.700}
.M2{stroke:#fff;stroke-width:6.500}.M3{stroke:#fff;stroke-width:9}
.r{stroke:#c9cacc;stroke-width:3}
text{font-family:Roboto,sans-serif;paint-order:stroke;stroke:#fff;stroke-width:2px;stroke-linejoin:round}
.k{stroke:none}
.o{display:flex;flex-direction:column;justify-content:space-between;min-height:0}
.top{display:flex;justify-content:space-between;padding:10px 10px 0}
.seg,.btn{background:#fff;border-radius:2px;box-shadow:0 1px 4px -1px rgba(0,0,0,.3);display:flex;align-items:center}
.seg{height:40px;width:169px;font-size:18px}
.seg b{font-weight:500;width:69px;display:flex;justify-content:center;border-right:1px solid #eee;line-height:40px}
.seg span{flex:1;display:flex;justify-content:center;color:#565656}
.btn{width:40px;height:40px;justify-content:center}
.bot{display:flex;flex-direction:column;align-items:flex-end}
.ctl{padding-right:10px;display:flex;flex-direction:column;gap:32px}
.zoom{height:81px;flex-direction:column;gap:0}
.zoom div{flex:1;display:flex;align-items:center;padding-bottom:4px}
.zoom hr+div{padding:5px 0 0}
.zoom hr{margin:0;border:0;width:30px;height:1px;background:#e6e6e6}
.c{display:flex;height:14px;margin-top:10px;background:rgba(245,245,245,.7);font:11.500px/14px "Liberation Serif",serif;color:#444;padding:0 7px 0 5px;gap:12px}
.c :last-child{font:10px/15px "Open Sans",sans-serif;color:#222}
</style><svg class="m" width="600" height="400" viewBox="652 484 600 400"></svg>
<div class="o"><div class="top"><div class="seg"><b>Map</b><span>Satellite</span></div><div class="btn"><ui-icon name="full" size="18"></ui-icon></div></div>
<div class="bot"><div class="ctl"><div class="btn"><svg width="18" height="32" viewBox="0 0 18 32" style="overflow:visible"><g style="stroke:#8f7c4c;stroke-width:1"><path style="fill:#fbbd2c" d="M4.500 10.500h9l3 10.500-2.500 1-1-3v11.500H9.500V22h-1v8.500H5V19l-1 3-2.500-1z"/><circle cx="9" cy="6.500" r="4.800" fill="#fbbd2c"/></g><path style="fill:#e07b2c" d="M6 11h6l-3 5z"/></svg></div>
<div class="btn zoom"><div><ui-icon name="plus" size="18"></ui-icon></div><hr><div><ui-icon name="minus" size="18"></ui-icon></div></div></div>
<div class="c"><fit-text w="111">Map data ©2018 Google</fit-text><fit-text w="61">Terms of Use</fit-text><fit-text w="83">Report a map error</fit-text></div></div></div>`,function(r){
  r.querySelector('svg.m').innerHTML=mapSvg();
});

define('task-item',`<style>
:host{display:flex;flex-direction:column;width:49px;flex:none;height:40px;align-items:center;justify-content:space-between}
:host([active]){background:#1863a0}
.i{flex:1;display:flex;align-items:center;padding-top:2px}
.u{height:2px;width:40px;background:transparent}
:host([open]) .u{background:#8fc4f0}
:host([active]) .u{width:48px}
:host([multi]) .u{background:linear-gradient(90deg,#8fc4f0 31px,#52708a 31px,#7191ab 32px)}
</style><div class="i"><ui-icon></ui-icon></div><div class="u"></div>`,function(r){
  const i=r.querySelector('ui-icon');i.setAttribute('name',this.getAttribute('icon'));i.setAttribute('size',this.getAttribute('size'));
});
define('task-bar',`<style>
:host{display:flex;justify-content:space-between;height:40px;flex:none;background:linear-gradient(90deg,#2b4c66 0,#2a4a62 340px,#0d3c60 400px,#0b3b5e 1450px,#0f3d5f 1550px,#2b4b64 1620px,#294860);font:12px "Open Sans",sans-serif;color:#fff}
.l{display:flex}
.r{display:flex;align-items:center;gap:8px}
.clock{display:flex;flex-direction:column;align-items:center;width:56px;line-height:18px;margin:0 8px 0 0}
.end{width:4px;height:40px;border-left:1px solid #8195a3;margin-left:12px}
</style><div class="l">
<task-item icon="win" size="16" style="width:48px"></task-item><task-item icon="task" size="17"></task-item><task-item icon="folder" size="22"></task-item><task-item icon="word" size="22" style="margin-left:1px" open></task-item><task-item icon="chrome" size="22" open active></task-item><task-item icon="gitw" size="24" open multi></task-item><task-item icon="cmd" size="21"></task-item><task-item icon="mongo" size="22" open></task-item><task-item icon="vs" size="23" open multi></task-item><task-item icon="slack" size="18" open></task-item></div>
<div class="r"><ui-icon name="help" size="21" style="margin-right:2px"></ui-icon><ui-icon name="up"></ui-icon><ui-icon name="snd"></ui-icon><ui-icon name="cloud"></ui-icon><ui-icon name="mon"></ui-icon><ui-icon name="orb"></ui-icon><ui-icon name="drop"></ui-icon>
<div class="clock"><fit-text w="48">10:01 PM</fit-text><fit-text w="52">8/24/2018</fit-text></div><ui-icon name="note"></ui-icon><div class="end"></div></div>`);
</script>
</body>
</html>
